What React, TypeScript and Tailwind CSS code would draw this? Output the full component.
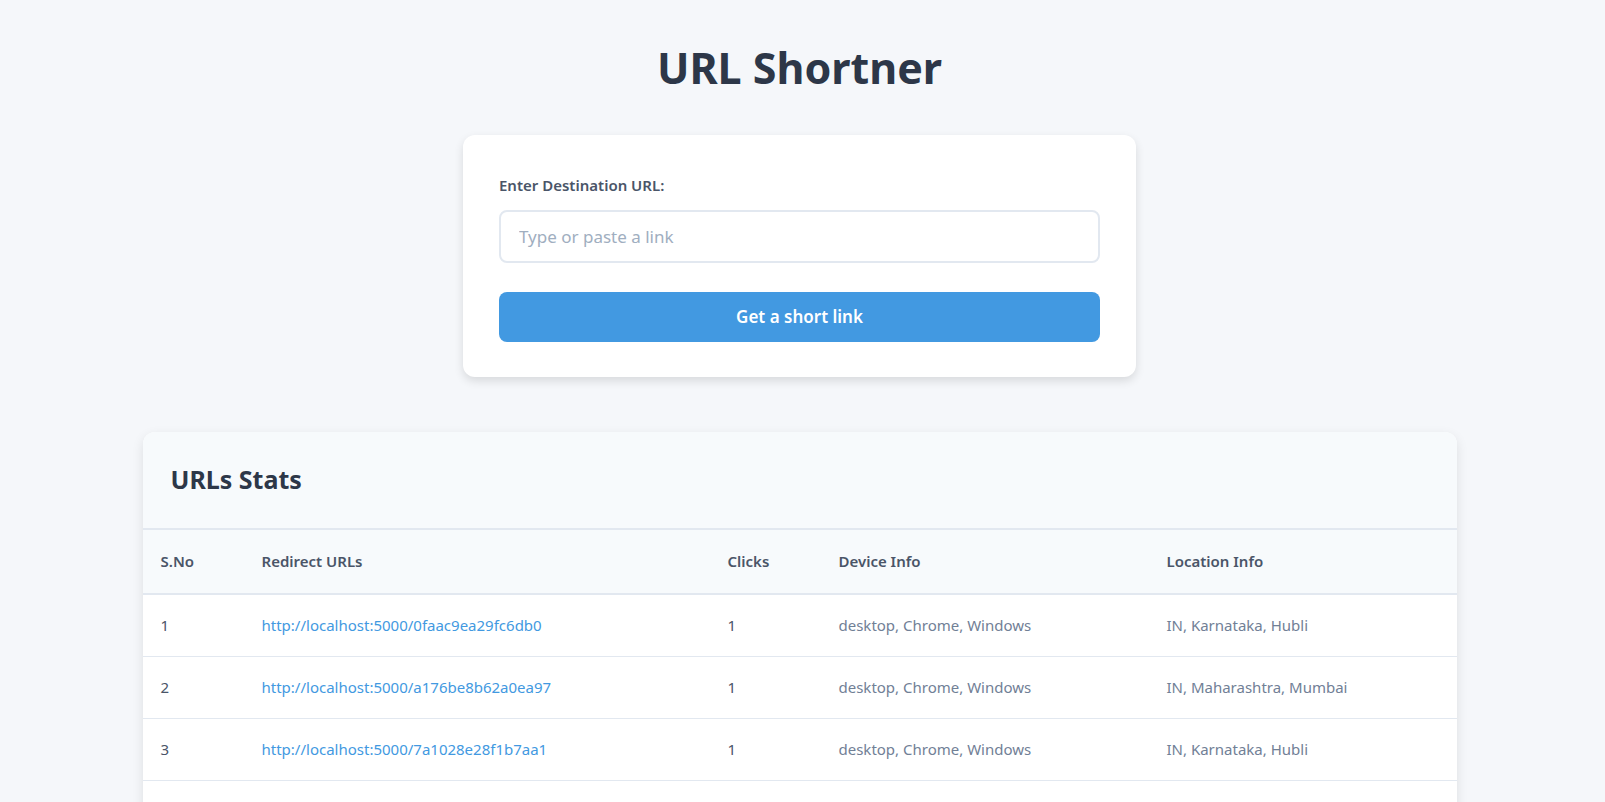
import React from 'react';

const ROWS = [
  { id: 1, url: 'http://localhost:5000/0faac9ea29fc6db0', clicks: 1, device: 'desktop, Chrome, Windows', location: 'IN, Karnataka, Hubli' },
  { id: 2, url: 'http://localhost:5000/a176be8b62a0ea97', clicks: 1, device: 'desktop, Chrome, Windows', location: 'IN, Maharashtra, Mumbai' },
  { id: 3, url: 'http://localhost:5000/7a1028e28f1b7aa1', clicks: 1, device: 'desktop, Chrome, Windows', location: 'IN, Karnataka, Hubli' },
];

export default function App() {
  return (
    <div className="min-h-screen bg-[#f5f7fa] pr-[6px] font-['Noto_Sans',sans-serif] text-[#2d3748]">
      <div className="pt-[38px] text-center">
        <h1 className="text-[43px] font-bold leading-[60px] text-[#2d3748]">URL Shortner</h1>
      </div>

      <div className="mx-auto mt-[37px] w-[673px] rounded-xl bg-white px-9 pt-[38px] pb-[35px] shadow-[0_4px_10px_rgba(0,0,0,0.12)]">
        <label className="block text-[15px] font-semibold leading-6 text-[#4a5568]">Enter Destination URL:</label>
        <input
          type="text"
          placeholder="Type or paste a link"
          className="mt-[13px] block h-[53px] w-full rounded-lg border-2 border-[#e2e8f0] bg-white px-[18px] text-[17px] text-[#2d3748] outline-none placeholder:text-[#a0aec0]"
        />
        <button className="mt-[29px] block h-[50px] w-full rounded-lg bg-[#4299e1] text-[17px] font-semibold text-white">
          Get a short link
        </button>
      </div>

      <div className="mx-auto mt-[55px] w-[1314px] overflow-hidden rounded-t-xl bg-white shadow-[0_4px_12px_rgba(0,0,0,0.1)]">
        <div className="flex h-[98px] items-center border-b-2 border-[#e2e8f0] bg-[#f7fafc] px-7">
          <h2 className="text-[25px] font-bold text-[#2d3748]">URLs Stats</h2>
        </div>
        <table className="w-full border-collapse text-left">
          <thead>
            <tr className="h-[64px] border-b-2 border-[#e2e8f0] bg-[#f7fafc] text-[15px] text-[#4a5568]">
              <th className="w-[101px] pl-[18px] font-semibold">S.No</th>
              <th className="w-[466px] pl-[18px] font-semibold">Redirect URLs</th>
              <th className="w-[111px] pl-[18px] font-semibold">Clicks</th>
              <th className="w-[328px] pl-[18px] font-semibold">Device Info</th>
              <th className="pl-[18px] font-semibold">Location Info</th>
            </tr>
          </thead>
          <tbody>
            {ROWS.map((r) => (
              <tr key={r.id} className="h-[62px] border-b border-[#e2e8f0] text-[15px] text-[#718096]">
                <td className="pl-[18px] text-[#4a5568]">{r.id}</td>
                <td className="pl-[18px]">
                  <a href="#" className="text-[#4299e1]">{r.url}</a>
                </td>
                <td className="pl-[18px] text-[#4a5568]">{r.clicks}</td>
                <td className="pl-[18px]">{r.device}</td>
                <td className="pl-[18px]">{r.location}</td>
              </tr>
            ))}
            <tr className="h-[62px]">
              <td colSpan={5} />
            </tr>
          </tbody>
        </table>
      </div>
    </div>
  );
}
